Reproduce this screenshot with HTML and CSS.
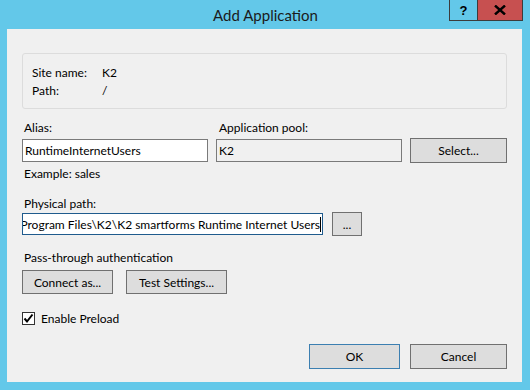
FILE: index.html
```html
<!DOCTYPE html>
<html lang="en">
<head>
    <meta charset="UTF-8">
    <title>Add Application</title>
    <link rel="stylesheet" href="styles.css">
</head>
<body>
    <div class="window">
        <div class="titlebar">
            <span class="title">Add Application</span>
            <div class="caption-buttons">
                <span class="cap-btn help">?</span>
                <span class="cap-btn close">
                    <svg width="12" height="10" viewBox="0 0 12 10"><path d="M1 0.5 L11 9.5 M11 0.5 L1 9.5" stroke="#000" stroke-width="2.4"/></svg>
                </span>
            </div>
        </div>

        <div class="client">
            <!-- Site info -->
            <div class="group-box">
                <div class="info-row"><span class="info-key">Site name:</span><span>K2</span></div>
                <div class="info-row"><span class="info-key">Path:</span><span>/</span></div>
            </div>

            <!-- Alias / Application pool -->
            <div class="field-grid">
                <label class="label alias-label">Alias:</label>
                <label class="label pool-label">Application pool:</label>
                <span></span>
                <div class="textbox">RuntimeInternetUsers</div>
                <div class="textbox readonly">K2</div>
                <button class="btn">Select...</button>
            </div>
            <div class="label hint">Example: sales</div>

            <!-- Physical path -->
            <div class="label section-label">Physical path:</div>
            <div class="path-row">
                <div class="textbox focused path-box"><span class="path-text">C:\Program Files\K2\K2 smartforms Runtime Internet Users</span></div>
                <button class="btn browse-btn">...</button>
            </div>

            <!-- Authentication -->
            <div class="label auth-label">Pass-through authentication</div>
            <div class="auth-row">
                <button class="btn connect-btn">Connect as...</button>
                <button class="btn test-btn">Test Settings...</button>
            </div>

            <div class="check-row">
                <span class="checkbox">
                    <svg width="11" height="11" viewBox="0 0 11 11"><path d="M1.5 5.5 L4 8.5 L9.5 1.5" fill="none" stroke="#000" stroke-width="2"/></svg>
                </span>
                <span>Enable Preload</span>
            </div>

            <div class="dialog-buttons">
                <button class="btn default">OK</button>
                <button class="btn cancel-btn">Cancel</button>
            </div>
        </div>
    </div>
</body>
</html>
```

FILE: styles.css
```css
body {
    margin: 0;
    background-color: #63c8e9;
    font-family: Lato, "Noto Sans", sans-serif;
    font-size: 12px;
    color: #000;
}

.window {
    width: 530px;
    height: 390px;
}

.titlebar {
    position: relative;
    height: 29px;
    display: flex;
    align-items: center;
    justify-content: center;
}

.title {
    font-size: 15px;
    color: #1b1b1b;
    padding-left: 1px;
}

.caption-buttons {
    position: absolute;
    top: 0;
    right: 7px;
    display: flex;
}

.cap-btn {
    height: 20px;
    border: 1px solid #3c3c3c;
    border-top: none;
    display: flex;
    align-items: center;
    justify-content: center;
    box-sizing: content-box;
}

.help {
    width: 27px;
    font-family: "Liberation Sans", sans-serif;
    font-weight: bold;
    font-size: 13px;
    border-right: none;
}

.close {
    width: 44px;
    background-color: #c75050;
}

.client {
    margin: 0 8px 0 7px;
    height: 353px;
    background-color: #f0f0f0;
    padding: 24px 15px 0 15px;
    box-sizing: border-box;
}

.group-box {
    height: 56px;
    box-sizing: border-box;
    border: 1px solid #dcdcdc;
    border-radius: 3px;
    padding: 10px 9px;
}

.info-row {
    display: flex;
    line-height: 18px;
}

.info-key {
    width: 70px;
}

.label {
    display: block;
    line-height: 16px;
}

.field-grid {
    display: grid;
    grid-template-columns: 186px 186px 97px;
    column-gap: 8px;
    row-gap: 2px;
    align-items: center;
    margin-top: 11px;
}

.alias-label {
    padding-left: 2px;
}

.pool-label {
    padding-left: 3px;
}

.textbox {
    height: 23px;
    box-sizing: border-box;
    border: 1px solid #7a7a7a;
    background-color: #fff;
    padding: 0 2px;
    display: flex;
    align-items: center;
    white-space: nowrap;
    overflow: hidden;
}

.textbox.readonly {
    background-color: #f0f0f0;
}

.textbox.focused {
    border-color: #1f5b8d;
}

.btn {
    height: 25px;
    box-sizing: border-box;
    border: 1px solid #707070;
    background-color: #dddddd;
    font-family: inherit;
    font-size: 12px;
    color: #000;
    padding: 0;
    margin: 0;
}

.hint {
    margin-top: 3px;
    padding-left: 2px;
}

.section-label {
    margin-top: 14px;
    padding-left: 2px;
}

.path-row {
    display: flex;
    align-items: center;
    gap: 9px;
    height: 24px;
}

.path-box {
    width: 301px;
    height: 22px;
    justify-content: flex-end;
    padding-right: 1px;
}

.path-text {
    border-right: 1px solid #000;
    line-height: 15px;
}

.browse-btn {
    width: 30px;
    height: 24px;
}

.auth-label {
    margin-top: 14px;
    padding-left: 2px;
}

.auth-row {
    display: flex;
    gap: 13px;
    margin-top: 4px;
}

.connect-btn {
    width: 91px;
    height: 24px;
}

.test-btn {
    width: 101px;
    height: 24px;
}

.check-row {
    display: flex;
    align-items: center;
    gap: 6px;
    margin-top: 16px;
    height: 16px;
}

.checkbox {
    width: 13px;
    height: 13px;
    box-sizing: border-box;
    border: 1px solid #333;
    background-color: #fff;
    display: flex;
    align-items: center;
    justify-content: center;
}

.dialog-buttons {
    display: flex;
    justify-content: flex-end;
    gap: 10px;
    margin-top: 18px;
}

.dialog-buttons .btn {
    width: 91px;
}

.dialog-buttons .cancel-btn {
    width: 97px;
}

.btn.default {
    border-color: #3c7fb1;
}
```
